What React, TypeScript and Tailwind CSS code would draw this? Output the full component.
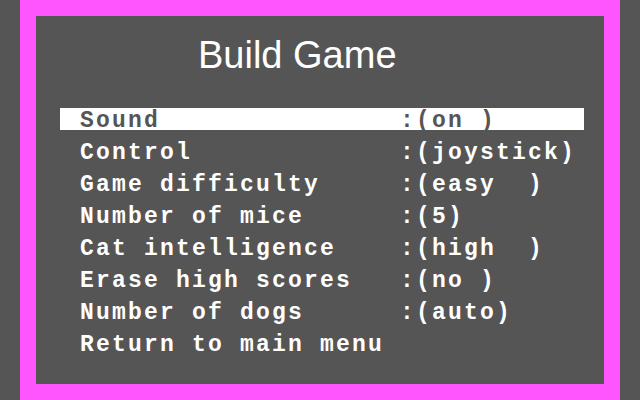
const options: { label: string; value?: string }[] = [
  { label: "Sound", value: "on " },
  { label: "Control", value: "joystick" },
  { label: "Game difficulty", value: "easy  " },
  { label: "Number of mice", value: "5" },
  { label: "Cat intelligence", value: "high  " },
  { label: "Erase high scores", value: "no " },
  { label: "Number of dogs", value: "auto" },
  { label: "Return to main menu" },
];

// 20-column label field, then ":(value)"
function line(label: string, value?: string) {
  if (value === undefined) return label;
  return label.padEnd(20, " ") + ":(" + value + ")";
}

export default function App() {
  const selected = 0;
  return (
    <div className="h-[400px] w-[640px] bg-[#555555] px-5">
      <div className="h-full bg-[#ff55ff] p-4">
        <div className="flex h-full flex-col bg-[#555555]">
          <h1
            className="pl-[162px] pt-[20px] text-[38px] leading-[38px] text-white"
            style={{ fontFamily: '"Liberation Sans", Arial, sans-serif' }}
          >
            Build Game
          </h1>
          <ul
            className="mt-[34px] ml-6 mr-5 flex flex-col gap-[10px] font-bold"
            style={{ fontFamily: '"Liberation Mono", "Courier New", monospace' }}
          >
            {options.map((o, i) => (
              <li
                key={o.label}
                className={`h-[22px] whitespace-pre pl-5 pt-[2px] text-[23px] leading-[22px] tracking-[2.2px] ${
                  i === selected ? "bg-white text-[#555555]" : "text-white"
                }`}
              >
                {line(o.label, o.value)}
              </li>
            ))}
          </ul>
        </div>
      </div>
    </div>
  );
}
